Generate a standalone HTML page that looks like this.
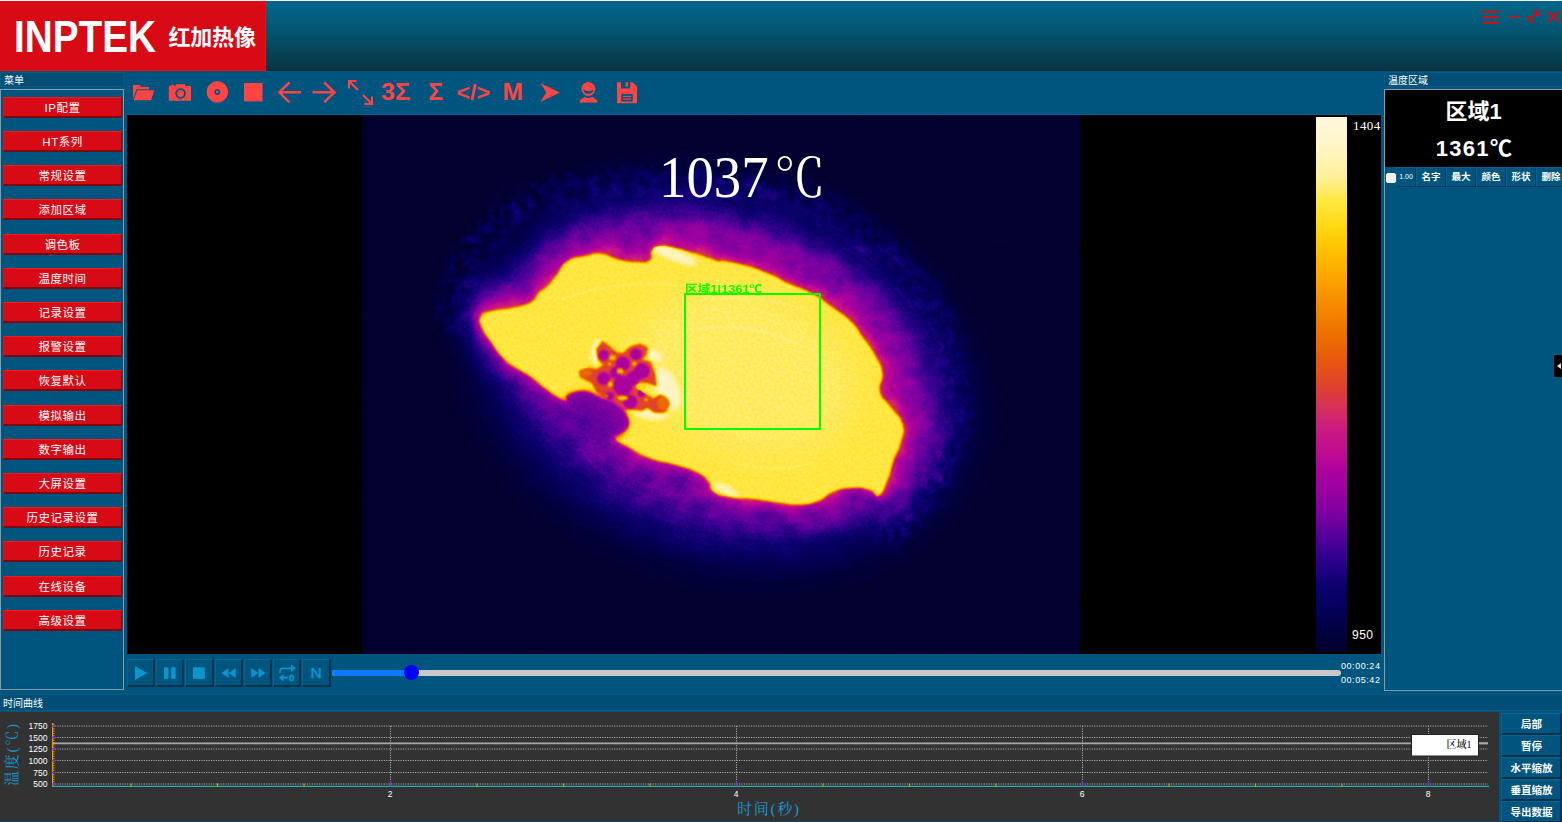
<!DOCTYPE html>
<html lang="zh-CN">
<head>
<meta charset="utf-8">
<title>INPTEK 红加热像</title>
<style>
*{box-sizing:border-box;margin:0;padding:0}
html,body{width:1562px;height:822px;overflow:hidden;background:#00557f}
body{position:relative;font-family:"Liberation Sans","Noto Sans CJK SC",sans-serif;color:#fff}
.abs{position:absolute}
#hdr{left:0;top:0;width:1562px;height:71px;background:linear-gradient(#00678b 0px,#045672 29px,#06465a 49px,#0a3443 69px,#0c2e3b 70px);border-top:1px solid #fff}
#logo{left:0;top:1px;width:266px;height:70px;background:#d70a16;border-right:1px solid #f80a0a;border-bottom:1px solid #f80a0a}
#logo .en{position:absolute;left:14px;top:10.5px;font:bold 44px/50px "Liberation Sans",sans-serif;color:#fff;transform-origin:0 0;transform:scaleX(0.88)}
#logo .cn{position:absolute;left:168.5px;top:22px;font:bold 22px/30px "Liberation Sans","Noto Sans CJK SC",sans-serif;color:#fff;letter-spacing:-0.2px}
.tbar{background:#004e76;border:1px solid #0a5a82;font:10px/16px "Liberation Sans","Noto Sans CJK SC",sans-serif;color:#fff;padding-left:3px;height:15px;overflow:hidden}
.panel{border:1px solid #8e9aa2;border-bottom-color:#7f98a8;background:#00557f}
.mbtn{position:absolute;left:3px;width:119px;height:21px;background:#d70a16;border-top:1px solid #ef1c1c;border-left:1px solid #e01018;border-right:1px solid #8c0c12;border-bottom:2px solid #7a0a10;color:#fff;font:11.5px/20.5px "Liberation Sans","Noto Sans CJK SC",sans-serif;text-align:center;letter-spacing:0.5px;overflow:hidden}
.rb{top:167px;width:30px;height:20px;background:#00557f;border-top:1px solid #0b6490;border-left:1px solid #0b6490;border-right:1px solid #003a58;border-bottom:1px solid #003a58;font:bold 9.5px/17px "Liberation Sans","Noto Sans CJK SC",sans-serif;color:#fff;text-align:center;white-space:nowrap;overflow:hidden}
.pb{top:659px;width:28px;height:28px;background:#00557f;border-top:1px solid #0a6391;border-left:1px solid #0a6391;border-right:2px solid #00324c;border-bottom:2px solid #00324c}
.tm{left:1341px;width:40px;font:9px/12px "Liberation Sans",sans-serif;color:#fff;letter-spacing:0.55px;white-space:nowrap}
.cb{left:1501px;width:61px;height:22px;background:#00557f;border-top:1px solid #0a6391;border-left:1px solid #0a6391;border-right:2px solid #00304a;border-bottom:2px solid #00304a;font:bold 10.5px/20px "Liberation Sans","Noto Sans CJK SC",sans-serif;color:#fff;text-align:center;white-space:nowrap;padding-left:1px}
</style>
</head>
<body>
<!-- header -->
<div id="hdr" class="abs"></div>
<div id="logo" class="abs"><span class="en">INPTEK</span><span class="cn">红加热像</span></div>

<!-- left menu -->
<div class="abs tbar" style="left:0;top:72px;width:124px">菜单</div>
<div class="abs panel" style="left:0;top:89px;width:124px;height:601px"></div>
<div id="menu">
<div class="mbtn" style="top:97px">IP配置</div>
<div class="mbtn" style="top:131px">HT系列</div>
<div class="mbtn" style="top:165px">常规设置</div>
<div class="mbtn" style="top:199px">添加区域</div>
<div class="mbtn" style="top:234px">调色板</div>
<div class="mbtn" style="top:268px">温度时间</div>
<div class="mbtn" style="top:302px">记录设置</div>
<div class="mbtn" style="top:336px">报警设置</div>
<div class="mbtn" style="top:370px">恢复默认</div>
<div class="mbtn" style="top:405px">模拟输出</div>
<div class="mbtn" style="top:439px">数字输出</div>
<div class="mbtn" style="top:473px">大屏设置</div>
<div class="mbtn" style="top:507px">历史记录设置</div>
<div class="mbtn" style="top:541px">历史记录</div>
<div class="mbtn" style="top:576px">在线设备</div>
<div class="mbtn" style="top:610px">高级设置</div>
</div>

<!-- video -->
<div id="video" class="abs" style="left:127px;top:115px;width:1254px;height:539px;background:#000"></div>

<div id="vline" class="abs" style="left:127px;top:114px;width:1254px;height:1px;background:#006294"></div>
<!--THERMAL-->
<svg class="abs" style="left:362px;top:115px" width="718" height="539" viewBox="362 115 718 539">
<defs>
<filter id="pal" x="0" y="0" width="100%" height="100%" color-interpolation-filters="sRGB">
<feTurbulence type="fractalNoise" baseFrequency="0.35" numOctaves="2" seed="7" result="n"/>
<feColorMatrix in="n" type="matrix" values="1 0 0 0 0  1 0 0 0 0  1 0 0 0 0  0 0 0 0 1" result="ng"/>
<feComposite in="SourceGraphic" in2="ng" operator="arithmetic" k1="0" k2="1" k3="0.05" k4="-0.025" result="h"/>
<feComponentTransfer in="h">
<feFuncR type="table" tableValues="0.004 0.007 0.010 0.015 0.030 0.050 0.113 0.185 0.275 0.365 0.456 0.532 0.602 0.648 0.700 0.754 0.781 0.809 0.836 0.861 0.881 0.896 0.911 0.923 0.935 0.950 0.966 0.982 0.995 1.000 1.000 1.000 1.000 1.000 1.000 1.000 1.000 1.000 1.000 1.000 1.000"/>
<feFuncG type="table" tableValues="0.000 0.000 0.000 0.000 0.000 0.000 0.000 0.000 0.000 0.000 0.000 0.000 0.000 0.000 0.021 0.048 0.080 0.118 0.168 0.215 0.261 0.309 0.357 0.403 0.449 0.496 0.545 0.594 0.646 0.700 0.756 0.805 0.851 0.887 0.916 0.935 0.946 0.954 0.961 0.967 0.973"/>
<feFuncB type="table" tableValues="0.173 0.226 0.281 0.339 0.391 0.441 0.496 0.545 0.580 0.606 0.625 0.627 0.627 0.627 0.600 0.563 0.527 0.473 0.382 0.278 0.174 0.104 0.038 0.023 0.007 0.000 0.000 0.000 0.000 0.000 0.000 0.038 0.089 0.178 0.309 0.514 0.637 0.714 0.787 0.825 0.863"/>
</feComponentTransfer>
</filter>
<filter id="b40" x="-50%" y="-50%" width="200%" height="200%"><feGaussianBlur stdDeviation="30"/></filter>
<filter id="b16" x="-50%" y="-50%" width="200%" height="200%"><feGaussianBlur stdDeviation="15"/></filter>
<filter id="b5" x="-50%" y="-50%" width="200%" height="200%"><feGaussianBlur stdDeviation="5"/></filter>
<filter id="b3" x="-50%" y="-50%" width="200%" height="200%"><feGaussianBlur stdDeviation="2.5"/></filter>
<filter id="b1" x="-5%" y="-5%" width="110%" height="110%"><feGaussianBlur stdDeviation="0.9"/></filter>
<filter id="mot" x="0" y="0" width="100%" height="100%" color-interpolation-filters="sRGB">
<feTurbulence type="fractalNoise" baseFrequency="0.045" numOctaves="3" seed="11" result="t"/>
<feColorMatrix in="t" type="matrix" values="1 0 0 0 0  1 0 0 0 0  1 0 0 0 0  0 0 0 0 1" result="tg"/>
<feComposite in="SourceGraphic" in2="tg" operator="arithmetic" k1="0.5" k2="0.75" k3="0" k4="0"/>
</filter>
<filter id="rg" x="-20%" y="-20%" width="140%" height="140%" color-interpolation-filters="sRGB">
<feTurbulence type="fractalNoise" baseFrequency="0.09" numOctaves="3" seed="3" result="t"/>
<feColorMatrix in="t" type="matrix" values="0 0 0 0 1  0 0 0 0 1  0 0 0 0 1  2.6 0 0 0 -0.9" result="m"/>
<feGaussianBlur in="SourceGraphic" stdDeviation="7" result="s"/>
<feComposite in="s" in2="m" operator="in"/>
</filter>
<clipPath id="cb"><path d="M566.0,400.7C561.1,399.8 558.8,397.8 549.5,391.5C540.2,385.2 540.7,383.8 531.0,377.0C521.3,370.2 520.7,371.4 513.0,366.0C505.3,360.6 507.9,363.3 502.0,356.9C496.1,350.5 496.3,349.8 491.0,342.0C485.7,334.2 484.7,334.4 482.0,327.7C479.3,321.0 478.5,321.2 480.9,316.7C483.3,312.2 482.4,313.4 491.0,311.0C499.6,308.6 502.3,310.0 513.0,307.6C523.7,305.2 524.4,305.9 531.2,302.0C538.0,298.1 534.1,297.3 538.5,293.0C542.9,288.7 542.8,290.6 547.7,285.7C552.6,280.8 551.5,281.3 556.8,274.7C562.1,268.1 559.9,265.9 567.7,260.9C575.5,255.9 577.2,257.7 586.0,255.8C594.8,253.9 591.9,252.6 600.6,253.6C609.3,254.6 609.1,257.2 618.8,259.4C628.5,261.6 628.7,261.8 637.0,262.0C645.3,262.2 646.0,262.9 649.9,260.0C653.8,257.1 649.3,254.7 651.7,251.0C654.1,247.3 653.2,247.3 659.0,246.3C664.8,245.3 663.9,245.5 673.6,247.4C683.3,249.3 683.8,250.0 695.5,253.6C707.2,257.2 709.9,259.0 717.4,260.9C724.9,262.8 716.3,259.6 723.8,260.9C731.3,262.2 733.1,261.9 745.7,265.6C758.3,269.3 759.3,269.8 771.0,274.7C782.7,279.6 778.7,279.0 789.5,283.9C800.3,288.8 799.8,286.7 811.4,293.0C823.0,299.3 822.3,299.9 833.0,307.6C843.7,315.3 843.6,314.2 851.5,322.0C859.4,329.8 856.2,328.0 862.5,336.8C868.8,345.6 869.7,345.3 875.0,355.0C880.3,364.7 881.2,363.3 882.5,373.0C883.8,382.7 878.0,382.7 880.0,391.5C882.0,400.3 884.0,397.3 890.0,406.0C896.0,414.7 899.7,414.2 902.6,424.0C905.5,433.8 903.2,432.7 900.8,442.6C898.4,452.5 896.9,451.3 893.5,461.0C890.1,470.7 891.9,469.8 888.0,479.0C884.1,488.2 883.9,492.6 879.0,495.5C874.1,498.4 877.1,492.0 869.8,490.0C862.5,488.0 861.3,487.5 851.5,488.0C841.7,488.5 841.7,488.5 833.0,492.0C824.3,495.5 827.5,497.6 818.7,501.0C809.9,504.4 810.7,504.2 800.0,504.7C789.3,505.2 791.0,504.3 778.5,502.8C766.0,501.3 765.4,500.4 753.0,499.0C740.6,497.6 742.5,499.3 732.0,497.4C721.5,495.5 720.1,496.4 713.7,492.0C707.3,487.6 712.9,486.4 708.0,481.0C703.1,475.6 704.7,476.2 695.5,471.8C686.3,467.4 685.3,467.9 673.6,464.5C661.9,461.1 663.4,463.4 651.7,459.0C640.0,454.6 639.6,453.9 629.8,448.0C620.0,442.1 615.5,442.3 615.0,437.0C614.5,431.7 625.1,434.3 628.0,428.0C630.9,421.7 629.5,420.3 626.0,413.5C622.5,406.7 621.8,406.4 615.0,402.5C608.2,398.6 608.3,401.9 600.6,399.0C592.9,396.1 594.7,392.6 586.0,391.5C577.3,390.4 573.3,392.5 568.0,395.0C562.7,397.5 570.9,401.6 566.0,400.7Z"/></clipPath>
<clipPath id="cs"><path d="M602.3,341.2 L608.2,345.5 L616.9,352.8 L622.8,353.6 L630.0,347.0 L640.3,344.0 L647.6,347.7 L646.0,355.0 L641.8,359.4 L650.5,362.3 L654.9,374.0 L656.4,385.7 L647.6,382.8 L638.8,382.8 L635.9,387.0 L643.2,393.0 L653.4,398.8 L660.7,394.5 L669.5,403.2 L665.0,412.0 L654.9,412.7 L647.6,407.6 L641.8,410.5 L628.6,409.0 L624.2,410.5 L611.0,401.8 L596.5,391.5 L592.0,382.8 L580.4,377.0 L579.7,371.0 L589.2,368.2 L596.5,369.6 L603.8,365.3 L598.0,359.4 L596.5,349.2Z"/></clipPath>
</defs>
<g filter="url(#pal)">
<g filter="url(#mot)">
<rect x="362" y="115" width="718" height="539" fill="#000"/>
<ellipse cx="722" cy="374" rx="234" ry="168" transform="rotate(18 722 374)" fill="rgb(60,60,60)" filter="url(#b40)"/>
<path d="M452,320C453,314 454,297 458,285C462,273 464,262 475,248C486,234 506,212 527,202C548,192 576,189 600,186C624,183 647,181 674,182C701,183 734,187 760,192C786,197 806,200 828,212C850,224 875,245 893,262C911,279 925,294 935,315C945,336 952,370 955,391C958,412 954,424 950,440C946,456 938,474 928,490C918,506 896,528 890,535" fill="none" stroke="rgb(64,64,64)" stroke-width="32" stroke-linecap="round" opacity="0.42" filter="url(#rg)"/>
<g transform="translate(8,-7)"><path d="M566.0,400.7C561.1,399.8 558.8,397.8 549.5,391.5C540.2,385.2 540.7,383.8 531.0,377.0C521.3,370.2 520.7,371.4 513.0,366.0C505.3,360.6 507.9,363.3 502.0,356.9C496.1,350.5 496.3,349.8 491.0,342.0C485.7,334.2 484.7,334.4 482.0,327.7C479.3,321.0 478.5,321.2 480.9,316.7C483.3,312.2 482.4,313.4 491.0,311.0C499.6,308.6 502.3,310.0 513.0,307.6C523.7,305.2 524.4,305.9 531.2,302.0C538.0,298.1 534.1,297.3 538.5,293.0C542.9,288.7 542.8,290.6 547.7,285.7C552.6,280.8 551.5,281.3 556.8,274.7C562.1,268.1 559.9,265.9 567.7,260.9C575.5,255.9 577.2,257.7 586.0,255.8C594.8,253.9 591.9,252.6 600.6,253.6C609.3,254.6 609.1,257.2 618.8,259.4C628.5,261.6 628.7,261.8 637.0,262.0C645.3,262.2 646.0,262.9 649.9,260.0C653.8,257.1 649.3,254.7 651.7,251.0C654.1,247.3 653.2,247.3 659.0,246.3C664.8,245.3 663.9,245.5 673.6,247.4C683.3,249.3 683.8,250.0 695.5,253.6C707.2,257.2 709.9,259.0 717.4,260.9C724.9,262.8 716.3,259.6 723.8,260.9C731.3,262.2 733.1,261.9 745.7,265.6C758.3,269.3 759.3,269.8 771.0,274.7C782.7,279.6 778.7,279.0 789.5,283.9C800.3,288.8 799.8,286.7 811.4,293.0C823.0,299.3 822.3,299.9 833.0,307.6C843.7,315.3 843.6,314.2 851.5,322.0C859.4,329.8 856.2,328.0 862.5,336.8C868.8,345.6 869.7,345.3 875.0,355.0C880.3,364.7 881.2,363.3 882.5,373.0C883.8,382.7 878.0,382.7 880.0,391.5C882.0,400.3 884.0,397.3 890.0,406.0C896.0,414.7 899.7,414.2 902.6,424.0C905.5,433.8 903.2,432.7 900.8,442.6C898.4,452.5 896.9,451.3 893.5,461.0C890.1,470.7 891.9,469.8 888.0,479.0C884.1,488.2 883.9,492.6 879.0,495.5C874.1,498.4 877.1,492.0 869.8,490.0C862.5,488.0 861.3,487.5 851.5,488.0C841.7,488.5 841.7,488.5 833.0,492.0C824.3,495.5 827.5,497.6 818.7,501.0C809.9,504.4 810.7,504.2 800.0,504.7C789.3,505.2 791.0,504.3 778.5,502.8C766.0,501.3 765.4,500.4 753.0,499.0C740.6,497.6 742.5,499.3 732.0,497.4C721.5,495.5 720.1,496.4 713.7,492.0C707.3,487.6 712.9,486.4 708.0,481.0C703.1,475.6 704.7,476.2 695.5,471.8C686.3,467.4 685.3,467.9 673.6,464.5C661.9,461.1 663.4,463.4 651.7,459.0C640.0,454.6 639.6,453.9 629.8,448.0C620.0,442.1 615.5,442.3 615.0,437.0C614.5,431.7 625.1,434.3 628.0,428.0C630.9,421.7 629.5,420.3 626.0,413.5C622.5,406.7 621.8,406.4 615.0,402.5C608.2,398.6 608.3,401.9 600.6,399.0C592.9,396.1 594.7,392.6 586.0,391.5C577.3,390.4 573.3,392.5 568.0,395.0C562.7,397.5 570.9,401.6 566.0,400.7Z" fill="rgb(76,76,76)" stroke="rgb(76,76,76)" stroke-width="42" stroke-linejoin="round" filter="url(#b16)"/></g>
<path d="M566.0,400.7C561.1,399.8 558.8,397.8 549.5,391.5C540.2,385.2 540.7,383.8 531.0,377.0C521.3,370.2 520.7,371.4 513.0,366.0C505.3,360.6 507.9,363.3 502.0,356.9C496.1,350.5 496.3,349.8 491.0,342.0C485.7,334.2 484.7,334.4 482.0,327.7C479.3,321.0 478.5,321.2 480.9,316.7C483.3,312.2 482.4,313.4 491.0,311.0C499.6,308.6 502.3,310.0 513.0,307.6C523.7,305.2 524.4,305.9 531.2,302.0C538.0,298.1 534.1,297.3 538.5,293.0C542.9,288.7 542.8,290.6 547.7,285.7C552.6,280.8 551.5,281.3 556.8,274.7C562.1,268.1 559.9,265.9 567.7,260.9C575.5,255.9 577.2,257.7 586.0,255.8C594.8,253.9 591.9,252.6 600.6,253.6C609.3,254.6 609.1,257.2 618.8,259.4C628.5,261.6 628.7,261.8 637.0,262.0C645.3,262.2 646.0,262.9 649.9,260.0C653.8,257.1 649.3,254.7 651.7,251.0C654.1,247.3 653.2,247.3 659.0,246.3C664.8,245.3 663.9,245.5 673.6,247.4C683.3,249.3 683.8,250.0 695.5,253.6C707.2,257.2 709.9,259.0 717.4,260.9C724.9,262.8 716.3,259.6 723.8,260.9C731.3,262.2 733.1,261.9 745.7,265.6C758.3,269.3 759.3,269.8 771.0,274.7C782.7,279.6 778.7,279.0 789.5,283.9C800.3,288.8 799.8,286.7 811.4,293.0C823.0,299.3 822.3,299.9 833.0,307.6C843.7,315.3 843.6,314.2 851.5,322.0C859.4,329.8 856.2,328.0 862.5,336.8C868.8,345.6 869.7,345.3 875.0,355.0C880.3,364.7 881.2,363.3 882.5,373.0C883.8,382.7 878.0,382.7 880.0,391.5C882.0,400.3 884.0,397.3 890.0,406.0C896.0,414.7 899.7,414.2 902.6,424.0C905.5,433.8 903.2,432.7 900.8,442.6C898.4,452.5 896.9,451.3 893.5,461.0C890.1,470.7 891.9,469.8 888.0,479.0C884.1,488.2 883.9,492.6 879.0,495.5C874.1,498.4 877.1,492.0 869.8,490.0C862.5,488.0 861.3,487.5 851.5,488.0C841.7,488.5 841.7,488.5 833.0,492.0C824.3,495.5 827.5,497.6 818.7,501.0C809.9,504.4 810.7,504.2 800.0,504.7C789.3,505.2 791.0,504.3 778.5,502.8C766.0,501.3 765.4,500.4 753.0,499.0C740.6,497.6 742.5,499.3 732.0,497.4C721.5,495.5 720.1,496.4 713.7,492.0C707.3,487.6 712.9,486.4 708.0,481.0C703.1,475.6 704.7,476.2 695.5,471.8C686.3,467.4 685.3,467.9 673.6,464.5C661.9,461.1 663.4,463.4 651.7,459.0C640.0,454.6 639.6,453.9 629.8,448.0C620.0,442.1 615.5,442.3 615.0,437.0C614.5,431.7 625.1,434.3 628.0,428.0C630.9,421.7 629.5,420.3 626.0,413.5C622.5,406.7 621.8,406.4 615.0,402.5C608.2,398.6 608.3,401.9 600.6,399.0C592.9,396.1 594.7,392.6 586.0,391.5C577.3,390.4 573.3,392.5 568.0,395.0C562.7,397.5 570.9,401.6 566.0,400.7Z" fill="rgb(110,110,110)" stroke="rgb(110,110,110)" stroke-width="8" stroke-linejoin="round" transform="translate(2,-2)" filter="url(#b5)"/>
</g>
<path d="M566.0,400.7C561.1,399.8 558.8,397.8 549.5,391.5C540.2,385.2 540.7,383.8 531.0,377.0C521.3,370.2 520.7,371.4 513.0,366.0C505.3,360.6 507.9,363.3 502.0,356.9C496.1,350.5 496.3,349.8 491.0,342.0C485.7,334.2 484.7,334.4 482.0,327.7C479.3,321.0 478.5,321.2 480.9,316.7C483.3,312.2 482.4,313.4 491.0,311.0C499.6,308.6 502.3,310.0 513.0,307.6C523.7,305.2 524.4,305.9 531.2,302.0C538.0,298.1 534.1,297.3 538.5,293.0C542.9,288.7 542.8,290.6 547.7,285.7C552.6,280.8 551.5,281.3 556.8,274.7C562.1,268.1 559.9,265.9 567.7,260.9C575.5,255.9 577.2,257.7 586.0,255.8C594.8,253.9 591.9,252.6 600.6,253.6C609.3,254.6 609.1,257.2 618.8,259.4C628.5,261.6 628.7,261.8 637.0,262.0C645.3,262.2 646.0,262.9 649.9,260.0C653.8,257.1 649.3,254.7 651.7,251.0C654.1,247.3 653.2,247.3 659.0,246.3C664.8,245.3 663.9,245.5 673.6,247.4C683.3,249.3 683.8,250.0 695.5,253.6C707.2,257.2 709.9,259.0 717.4,260.9C724.9,262.8 716.3,259.6 723.8,260.9C731.3,262.2 733.1,261.9 745.7,265.6C758.3,269.3 759.3,269.8 771.0,274.7C782.7,279.6 778.7,279.0 789.5,283.9C800.3,288.8 799.8,286.7 811.4,293.0C823.0,299.3 822.3,299.9 833.0,307.6C843.7,315.3 843.6,314.2 851.5,322.0C859.4,329.8 856.2,328.0 862.5,336.8C868.8,345.6 869.7,345.3 875.0,355.0C880.3,364.7 881.2,363.3 882.5,373.0C883.8,382.7 878.0,382.7 880.0,391.5C882.0,400.3 884.0,397.3 890.0,406.0C896.0,414.7 899.7,414.2 902.6,424.0C905.5,433.8 903.2,432.7 900.8,442.6C898.4,452.5 896.9,451.3 893.5,461.0C890.1,470.7 891.9,469.8 888.0,479.0C884.1,488.2 883.9,492.6 879.0,495.5C874.1,498.4 877.1,492.0 869.8,490.0C862.5,488.0 861.3,487.5 851.5,488.0C841.7,488.5 841.7,488.5 833.0,492.0C824.3,495.5 827.5,497.6 818.7,501.0C809.9,504.4 810.7,504.2 800.0,504.7C789.3,505.2 791.0,504.3 778.5,502.8C766.0,501.3 765.4,500.4 753.0,499.0C740.6,497.6 742.5,499.3 732.0,497.4C721.5,495.5 720.1,496.4 713.7,492.0C707.3,487.6 712.9,486.4 708.0,481.0C703.1,475.6 704.7,476.2 695.5,471.8C686.3,467.4 685.3,467.9 673.6,464.5C661.9,461.1 663.4,463.4 651.7,459.0C640.0,454.6 639.6,453.9 629.8,448.0C620.0,442.1 615.5,442.3 615.0,437.0C614.5,431.7 625.1,434.3 628.0,428.0C630.9,421.7 629.5,420.3 626.0,413.5C622.5,406.7 621.8,406.4 615.0,402.5C608.2,398.6 608.3,401.9 600.6,399.0C592.9,396.1 594.7,392.6 586.0,391.5C577.3,390.4 573.3,392.5 568.0,395.0C562.7,397.5 570.9,401.6 566.0,400.7Z" fill="rgb(214,214,214)" filter="url(#b1)"/>
<g clip-path="url(#cb)">
<ellipse cx="745" cy="372" rx="115" ry="80" transform="rotate(18 745 372)" fill="rgb(219,219,219)" filter="url(#b16)"/>
<g fill="rgb(242,242,242)" filter="url(#b3)">
<ellipse cx="667" cy="389" rx="10" ry="21" transform="rotate(-22 667 389)"/>
<ellipse cx="655" cy="356" rx="7" ry="4" transform="rotate(25 655 356)"/>
<ellipse cx="598" cy="352" rx="6" ry="12" transform="rotate(10 598 352)"/>
<ellipse cx="650" cy="414" rx="16" ry="4" transform="rotate(8 650 414)"/>
<ellipse cx="674" cy="255" rx="24" ry="4.5" transform="rotate(22 674 255)"/>
<ellipse cx="726" cy="490" rx="13" ry="3" transform="rotate(25 726 490)"/>
</g>
<g fill="none" stroke="rgb(230,230,230)" stroke-width="1.2" opacity="0.7" filter="url(#b1)">
<path d="M560,300 C600,285 640,280 680,286"/>
<path d="M700,300 C740,296 780,300 812,312"/>
<path d="M690,330 C730,322 770,330 800,345"/>
<path d="M730,462 C760,470 790,470 815,462"/>
</g>
</g>
<path d="M602.3,341.2 L608.2,345.5 L616.9,352.8 L622.8,353.6 L630.0,347.0 L640.3,344.0 L647.6,347.7 L646.0,355.0 L641.8,359.4 L650.5,362.3 L654.9,374.0 L656.4,385.7 L647.6,382.8 L638.8,382.8 L635.9,387.0 L643.2,393.0 L653.4,398.8 L660.7,394.5 L669.5,403.2 L665.0,412.0 L654.9,412.7 L647.6,407.6 L641.8,410.5 L628.6,409.0 L624.2,410.5 L611.0,401.8 L596.5,391.5 L592.0,382.8 L580.4,377.0 L579.7,371.0 L589.2,368.2 L596.5,369.6 L603.8,365.3 L598.0,359.4 L596.5,349.2Z" fill="rgb(128,128,128)" stroke="rgb(128,128,128)" stroke-width="1" stroke-linejoin="round" filter="url(#b1)"/>
<g fill="rgb(87,87,87)" filter="url(#b1)" clip-path="url(#cs)"><circle cx="603.8" cy="355.0" r="5.3"/><circle cx="635.9" cy="354.3" r="6.1"/><circle cx="622.8" cy="363.8" r="7.3"/><circle cx="641.8" cy="371.1" r="8.0"/><circle cx="622.8" cy="385.7" r="10.2"/><circle cx="603.8" cy="378.4" r="6.7"/><circle cx="630.1" cy="401.8" r="7.3"/><circle cx="609.6" cy="395.9" r="4.4"/><circle cx="641.8" cy="393.0" r="4.4"/><circle cx="615.5" cy="372.6" r="5.8"/><circle cx="633.0" cy="378.4" r="7.3"/></g>
<g fill="rgb(204,204,204)" filter="url(#b1)"><ellipse cx="612.6" cy="357.7" rx="3.2" ry="2.3"/><ellipse cx="620.1" cy="371.1" rx="3.2" ry="2.6"/><ellipse cx="634.5" cy="363.8" rx="2.0" ry="2.0"/><ellipse cx="610.4" cy="384.2" rx="2.3" ry="2.6"/><ellipse cx="622.8" cy="398.1" rx="5.3" ry="2.0"/><ellipse cx="641.8" cy="386.4" rx="5.8" ry="3.2"/><ellipse cx="606.4" cy="395.9" rx="1.5" ry="1.5"/><ellipse cx="609.6" cy="363.8" rx="1.8" ry="1.2"/><ellipse cx="646.1" cy="399.6" rx="1.8" ry="1.5"/></g>
<ellipse cx="663" cy="403" rx="6" ry="7" fill="rgb(148,148,148)" filter="url(#b1)"/>
<ellipse cx="586" cy="373" rx="6" ry="4" fill="rgb(148,148,148)" filter="url(#b1)"/>
<path d="M566,401 L570,394 L584,391 L600,396 L612,402 L624,411 L627,424 L622,434 L615,438 L596,424 L580,411Z" fill="rgb(69,69,69)" filter="url(#b3)"/>
<path d="M548,404 L566,400 L588,402 L606,412 L616,424 L612,442 L590,446 L566,428Z" fill="rgb(43,43,43)" opacity="0.3" filter="url(#b5)"/>
</g>
</svg>
<!--/THERMAL-->
<!--OVERLAY-->

<div class="abs" id="bigtemp" style="left:659px;top:148.5px;height:60px;font:53px/60px 'Liberation Serif','Noto Serif CJK SC',serif;color:#fff;white-space:nowrap"><span id="bt1" style="display:inline-block;transform-origin:0 80%;transform:scale(1.035,1.13)">1037</span><span id="bt2" style="position:absolute;left:115px;top:0.5px;font-size:50px;display:inline-block;transform-origin:0 50%;transform:scale(1.03,1.06)">℃</span></div>
<div class="abs" style="left:684px;top:293px;width:137px;height:137px;border:2px solid #00ff00"></div>
<div class="abs" id="roilbl" style="left:684.5px;top:281.5px;font:bold 11px/14px 'Liberation Sans','Noto Sans CJK SC',sans-serif;color:#00ff00;white-space:nowrap;transform-origin:0 100%;transform:scale(1.16,1)">区域1|1361℃</div>
<div class="abs" style="left:1316px;top:117px;width:31px;height:535px;background:linear-gradient(#fff8dc 0.0%, #fff5c8 5.2%, #fff096 11.6%, #ffe83c 15.9%, #ffd814 20.3%, #ffc300 24.6%, #ffaa00 29.0%, #fa9600 32.8%, #f07800 38.8%, #e85a0a 45.2%, #e04030 50.5%, #d83058 54.0%, #cc1a80 58.3%, #c00c90 62.6%, #a800a0 66.9%, #9800a0 70.3%, #7800a0 74.6%, #500098 78.9%, #280088 83.3%, #0c0070 87.6%, #04005a 91.9%, #020040 96.3%, #01002c 100.0%)"></div>
<div class="abs" style="left:1353px;top:118px;font:13px/15px 'Liberation Serif',serif;color:#fff;letter-spacing:0.4px">1404</div>
<div class="abs" style="left:1352px;top:628px;font:12px/15px 'Liberation Sans',sans-serif;color:#fff;letter-spacing:0.5px">950</div>

<!--/OVERLAY-->
<!--TOOLBAR-->
<svg class="abs" style="left:127px;top:72px" width="540" height="42" viewBox="127 72 540 42" fill="#ff4444" stroke="none" font-family="'Liberation Sans',sans-serif" font-weight="bold">
<!-- folder -->
<path d="M133,85 h6.5 l2,2 h7.5 v2.3 h-12.5 l-3.5,9.5 z"/>
<path d="M137.3,90.3 h16.9 l-3.2,9.9 h-17.6 z"/>
<!-- camera -->
<path d="M168.8,100.8 V86.4 l5,-2.3 v1.9 h1.5 l1,-1.8 h8.4 l1,1.8 h5.3 v14.8 z M180.6,88.2 a5.3,5.3 0 1 0 0.01,0 z" fill-rule="evenodd"/>
<circle cx="180.6" cy="93.5" r="3.4"/>
<!-- disc -->
<path d="M217.3,81.2 a10.7,10.7 0 1 0 0.01,0 z M217.3,88.9 a3,3 0 1 1 -0.01,0 z" fill-rule="evenodd"/>
<circle cx="217.3" cy="91.9" r="1.3"/>
<!-- stop square -->
<rect x="244" y="83" width="18.5" height="18.4"/>
<!-- arrows -->
<g fill="none" stroke="#ff4444" stroke-width="2.4" stroke-linecap="butt" stroke-linejoin="miter">
<path d="M301,92.3 H279.5 M289.5,82.3 L279.3,92.3 L289.5,102.3"/>
<path d="M312.7,92.3 H334.2 M324.2,82.3 L334.4,92.3 L324.2,102.3"/>
</g>
<g fill="none" stroke="#ff4444" stroke-width="2" stroke-linecap="butt">
<path d="M349,88.5 V81 H356.5 M349.5,81.5 L358,90"/>
<path d="M372,96.5 V104 H364.5 M371.5,103.5 L363,95"/>
</g>
<text x="381" y="100.4" font-size="24" textLength="29" lengthAdjust="spacingAndGlyphs">3Σ</text>
<text x="428.6" y="100.4" font-size="24" textLength="14.5" lengthAdjust="spacingAndGlyphs">Σ</text>
<text x="456.6" y="100.3" font-size="22" textLength="33.5" lengthAdjust="spacingAndGlyphs">&lt;/&gt;</text>
<text x="502.6" y="100.2" font-size="24" textLength="20.5" lengthAdjust="spacingAndGlyphs">M</text>
<!-- send -->
<path d="M540.4,83 L559.8,92.5 L540.4,102 L546.2,92.5 z"/>
<!-- user -->
<path d="M588.4,82 a6.9,6.9 0 1 0 0.01,0 z M583.2,89.5 q5.2,3.4 10.4,0 a5.3,5.3 0 0 1 -10.4,0 z" fill-rule="evenodd"/>
<path d="M579.3,102.4 q0.4,-3.2 5.2,-5.4 q3.9,2.2 7.8,0 q4.8,2.2 5.4,5.4 z"/>
<!-- save -->
<path d="M617,82.2 h15.6 l4.4,4.4 v16.6 h-20 z M621,82.2 v6.2 h9.2 v-6.2 h-2 v4.4 h-2.6 v-4.4 z M621.3,94 v7.4 h11.4 v-7.4 z" fill-rule="evenodd"/>
<rect x="622.8" y="95.8" width="8.4" height="1.2"/>
<rect x="622.8" y="98.4" width="8.4" height="1.2"/>
</svg>
<!--/TOOLBAR-->
<!--RIGHT-->
<svg class="abs" style="left:1476px;top:4px" width="86" height="26" viewBox="1476 4 86 26" fill="none" stroke="#d80c0c" stroke-linecap="butt">
<path d="M1482.3,11.8 H1498.4 M1482.3,17.3 H1498.4 M1482.3,22.7 H1498.4" stroke-width="2"/>
<path d="M1508.6,16.6 H1519.3" stroke-width="1.6"/>
<g stroke-width="1.5">
<path d="M1534.7,8.8 V15.3 H1541.2 M1535.2,14.8 L1539.8,10.2"/>
<path d="M1526,17.3 H1532.5 V23.8 M1532,17.8 L1527.3,22.5"/>
</g>
<path d="M1547.8,11.2 L1558.8,21.8 M1558.8,11.2 L1547.8,21.8" stroke-width="1.9"/>
</svg>
<div class="abs tbar" style="left:1384px;top:72px;width:178px;border-right:0">温度区域</div>
<div class="abs panel" style="left:1384px;top:89px;width:180px;height:602px"></div>
<div class="abs" style="left:1385px;top:90px;width:177px;height:77px;background:#000"></div>
<div class="abs rt" style="left:1385px;top:96px;width:177px;text-align:center;font:bold 22px/32px 'Liberation Sans','Noto Sans CJK SC',sans-serif">区域1</div>
<div class="abs rt" style="left:1386px;top:133px;width:177px;text-align:center;letter-spacing:1.3px;font:bold 22px/32px 'Liberation Sans','Noto Sans CJK SC',sans-serif">1361℃</div>
<div class="abs" style="left:1386px;top:173px;width:10px;height:10px;background:#f0f0f0;border:1px solid #fff;border-radius:2px"></div>
<div class="abs rb" style="left:1396px;width:20px;font:7px/18px 'Liberation Sans',sans-serif;font-weight:normal;color:#fff">1.00</div>
<div class="abs rb" style="left:1416px">名字</div>
<div class="abs rb" style="left:1446px">最大</div>
<div class="abs rb" style="left:1476px">颜色</div>
<div class="abs rb" style="left:1506px">形状</div>
<div class="abs rb" style="left:1536px">删除</div>
<div class="abs" style="left:1554px;top:354.5px;width:8px;height:22.5px;background:#000;border-radius:2px 0 0 2px"></div>
<div class="abs" style="left:1557px;top:362.5px;width:0;height:0;border:3.4px solid transparent;border-right:4.2px solid #e4e4e4;border-left:0"></div>

<!--/RIGHT-->
<!--PLAYER-->
<div class="abs pb" style="left:127px;width:28px"></div>
<div class="abs pb" style="left:156px;width:28px"></div>
<div class="abs pb" style="left:185px;width:29px"></div>
<div class="abs pb" style="left:215px;width:28px"></div>
<div class="abs pb" style="left:244px;width:28px"></div>
<div class="abs pb" style="left:273px;width:28px"></div>
<div class="abs pb" style="left:302px;width:29px"></div>
<svg class="abs" style="left:127px;top:659px" width="206" height="28" viewBox="127 659 206 28" fill="#0a96cc">
<path d="M135,666.2 L147.2,673.1 L135,680.0 z"/>
<rect x="164" y="667.3" width="4.4" height="11.6"/><rect x="171.2" y="667.3" width="4.4" height="11.6"/>
<rect x="193" y="667.3" width="11.8" height="11.6"/>
<path d="M221.5,673.0 L228.5,668.0 V678.0 z M228.7,673.0 L235.7,668.0 V678.0 z"/>
<path d="M265.5,673.0 L258.5,668.0 V678.0 z M258.3,673.0 L251.3,668.0 V678.0 z"/>
<g fill="none" stroke="#0a96cc" stroke-width="1.7">
<path d="M280,673.0 v-1.5 a3.2,3.2 0 0 1 3.2,-3.2 h9"/>
<path d="M288,677.7 h-8"/>
</g>
<path d="M291,664.5 l4.8,3.8 l-4.8,3.8 z M283.5,674.1 l-4.6,3.6 l4.6,3.6 z"/>
<text x="289" y="680.9" font-family="'Liberation Sans',sans-serif" font-weight="bold" font-size="9.5" stroke="#0a96cc" stroke-width="0.5">0</text>
<text x="316" y="678.1" text-anchor="middle" font-family="'Liberation Sans',sans-serif" font-size="15.5" stroke="#0a96cc" stroke-width="0.5">N</text>
</svg>
<div class="abs" style="left:332px;top:669.5px;width:1009px;height:6.5px;border-radius:3.5px;background:#c8c8c8"></div>
<div class="abs" style="left:332px;top:669.5px;width:84px;height:6.5px;border-radius:3.5px;background:#0a7aff"></div>
<div class="abs" style="left:404.2px;top:665.3px;width:14.8px;height:14.8px;border-radius:50%;background:#0000ff"></div>
<div class="abs tm" style="top:660px">00:00:24</div>
<div class="abs tm" style="top:674px">00:05:42</div>

<!--/PLAYER-->
<!--CHART-->
<div class="abs tbar" style="left:0;top:694px;width:1562px;height:17px;border-left:0;border-right:0;line-height:17px">时间曲线</div>
<div class="abs" style="left:0;top:712px;width:1499px;height:109px;background:#323232"></div>
<div class="abs" style="left:0;top:821px;width:1562px;height:1px;background:#0a4a6a"></div>
<svg class="abs" style="left:0;top:712px" width="1499" height="109" viewBox="0 712 1499 109" font-family="'Liberation Sans',sans-serif" font-size="8.5" fill="#fff">
<g stroke="#b4b4b4" stroke-width="1" stroke-dasharray="1.1 1.3" fill="none"><path d="M55,726 H1488"/><path d="M55,737.5 H1488"/><path d="M55,749 H1488"/><path d="M55,760.5 H1488"/><path d="M55,772.5 H1488"/><path d="M55,784 H1488"/><path d="M390.5,726 V785"/><path d="M736.5,726 V785"/><path d="M1082.5,726 V785"/><path d="M1428.5,726 V785"/></g>
<path d="M52,743.3 H1488" stroke="#a8a8a8" stroke-width="1.8" fill="none"/>
<path d="M52,786.3 H1489" stroke="#20b2aa" stroke-width="1.2" fill="none"/>
<path d="M52.5,723 V786" stroke="#e8a000" stroke-width="1" fill="none"/>
<g stroke="#e8a000" stroke-width="1" fill="none"><path d="M52,784.0 H54.5"/><path d="M52,781.7 H54.5"/><path d="M52,779.4 H54.5"/><path d="M52,777.1 H54.5"/><path d="M52,774.8 H54.5"/><path d="M52,772.5 H54.5"/><path d="M52,770.2 H54.5"/><path d="M52,767.9 H54.5"/><path d="M52,765.6 H54.5"/><path d="M52,763.3 H54.5"/><path d="M52,761.0 H54.5"/><path d="M52,758.7 H54.5"/><path d="M52,756.4 H54.5"/><path d="M52,754.1 H54.5"/><path d="M52,751.8 H54.5"/><path d="M52,749.5 H54.5"/><path d="M52,747.2 H54.5"/><path d="M52,744.9 H54.5"/><path d="M52,742.6 H54.5"/><path d="M52,740.3 H54.5"/><path d="M52,738.0 H54.5"/><path d="M52,735.7 H54.5"/><path d="M52,733.4 H54.5"/><path d="M52,731.1 H54.5"/><path d="M52,728.8 H54.5"/><path d="M52,726.5 H54.5"/><path d="M52,724.2 H54.5"/><path d="M131.0,783.5 V786.5"/><path d="M217.5,783.5 V786.5"/><path d="M304.0,783.5 V786.5"/><path d="M477.0,783.5 V786.5"/><path d="M563.5,783.5 V786.5"/><path d="M650.0,783.5 V786.5"/><path d="M823.0,783.5 V786.5"/><path d="M909.5,783.5 V786.5"/><path d="M996.0,783.5 V786.5"/><path d="M1169.0,783.5 V786.5"/><path d="M1255.5,783.5 V786.5"/><path d="M1342.0,783.5 V786.5"/></g>
<g stroke="#8a2be2" stroke-width="1.4" fill="none"><path d="M52,726 H56"/><path d="M52,737.5 H56"/><path d="M52,749 H56"/><path d="M52,760.5 H56"/><path d="M52,772.5 H56"/><path d="M52,784 H56"/><path d="M390.5,781 V786.5"/><path d="M736.5,781 V786.5"/><path d="M1082.5,781 V786.5"/><path d="M1428.5,781 V786.5"/></g>
<text x="47.5" y="729.2" text-anchor="end">1750</text><text x="47.5" y="740.7" text-anchor="end">1500</text><text x="47.5" y="752.2" text-anchor="end">1250</text><text x="47.5" y="763.7" text-anchor="end">1000</text><text x="47.5" y="775.7" text-anchor="end">750</text><text x="47.5" y="787.2" text-anchor="end">500</text><text x="390" y="797" text-anchor="middle">2</text><text x="736" y="797" text-anchor="middle">4</text><text x="1082" y="797" text-anchor="middle">6</text><text x="1428" y="797" text-anchor="middle">8</text>
<text transform="translate(17,786) rotate(-90)" font-family="'Liberation Serif','Noto Serif CJK SC',serif" font-size="15" fill="#1a9bd0" textLength="62">温度(℃)</text>
<text x="737" y="814" font-family="'Liberation Serif','Noto Serif CJK SC',serif" font-size="15" fill="#1a9bd0" textLength="62">时间(秒)</text>
<rect x="1411.5" y="734.5" width="67" height="21.5" fill="#fff" stroke="#222" stroke-width="1"/>
<path d="M1479,743.3 H1488" stroke="#a8a8a8" stroke-width="1.8"/>
<text x="1471.5" y="747.5" text-anchor="end" font-family="'Liberation Serif','Noto Serif CJK SC',serif" font-size="10" font-weight="500" fill="#000">区域1</text>
</svg>
<div class="abs cb" style="top:712.6px">局部</div>
<div class="abs cb" style="top:734.6px">暂停</div>
<div class="abs cb" style="top:756.6px">水平缩放</div>
<div class="abs cb" style="top:778.6px">垂直缩放</div>
<div class="abs cb" style="top:800.6px">导出数据</div>

<!--/CHART-->
</body>
</html>
